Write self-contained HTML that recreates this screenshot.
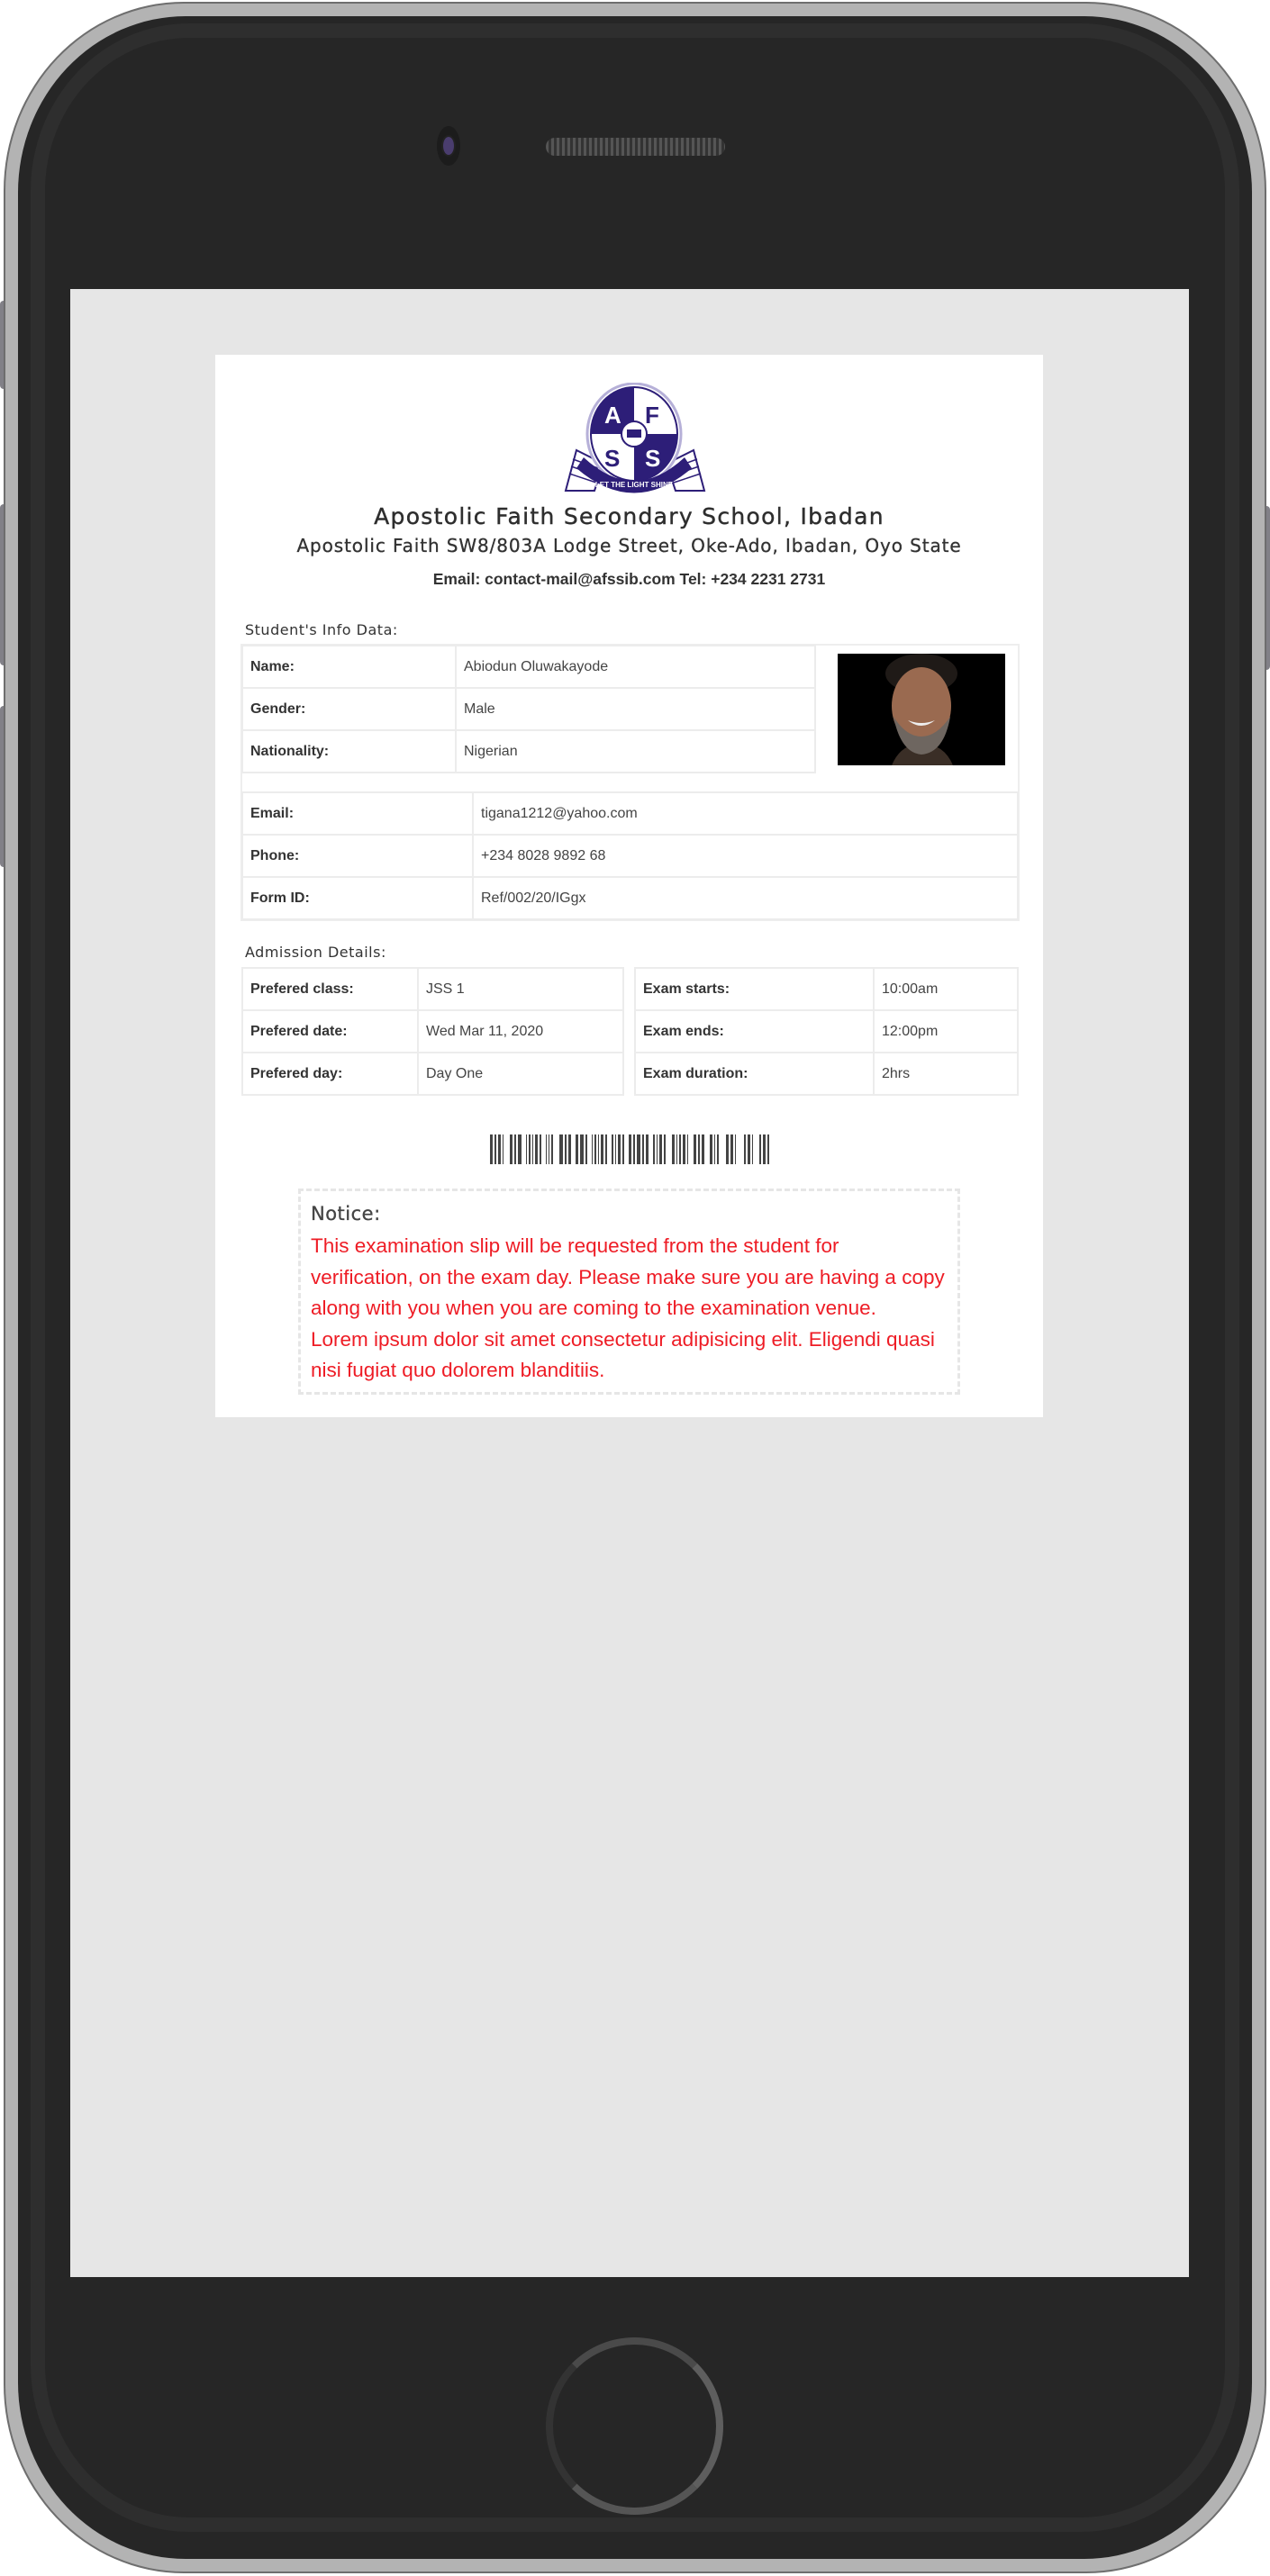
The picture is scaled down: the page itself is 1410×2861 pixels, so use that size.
<!DOCTYPE html>
<html><head><meta charset="utf-8">
<style>
*{margin:0;padding:0;box-sizing:border-box}
html,body{width:1410px;height:2861px;background:#fff;overflow:hidden}
body{position:relative;font-family:"Liberation Sans",sans-serif}
.abs{position:absolute}
.btn{position:absolute;left:0;width:10px;background:#818087;border-radius:4px 0 0 4px}
#outer{left:4px;top:2px;width:1402px;height:2856px;border-radius:200px/210px;background:#b3b3b3;border:2px solid #6e6e6e}
#body{left:20px;top:18px;width:1370px;height:2824px;border-radius:186px/196px;background:#262626}
#band{left:34px;top:26px;width:1342px;height:2786px;border-radius:176px/186px;border:16px solid #2e2e2e}
#screen{left:78px;top:321px;width:1242px;height:2208px;background:#e6e6e6}
#card{left:239px;top:394px;width:919px;height:1180px;background:#fff}
.h{font-family:"DejaVu Sans","Liberation Sans",sans-serif;color:#333;text-align:center;width:919px;left:239px}
table{border-collapse:collapse;position:absolute;font-size:16px;color:#333}
td{border:2px solid #ececec;height:47px;padding:0 8px;vertical-align:middle}
td.l{font-weight:bold;color:#333}
td.v{color:#444}
.sec{font-family:"DejaVu Sans",sans-serif;font-size:16px;color:#333;letter-spacing:0.5px}
</style></head><body>
<div class="btn" style="top:334px;height:98px"></div>
<div class="btn" style="top:560px;height:179px"></div>
<div class="btn" style="top:784px;height:179px"></div>
<div class="btn" style="left:1400px;top:562px;height:182px;border-radius:0 4px 4px 0;background:#818087"></div>
<div id="outer" class="abs"></div>
<div id="body" class="abs"></div>
<div id="band" class="abs"></div>
<div class="abs" style="left:485px;top:140px;width:26px;height:44px;border-radius:50%;background:#1c1c1c"></div>
<div class="abs" style="left:490px;top:150px;width:16px;height:24px;border-radius:50%;background:#4a3d6e;border:2px solid #222"></div>
<div class="abs" style="left:606px;top:153px;width:199px;height:20px;border-radius:10px;background:repeating-linear-gradient(90deg,#555 0 3px,#333 3px 6px)"></div>
<div id="screen" class="abs"></div>
<div class="abs" style="left:606px;top:2596px;width:197px;height:197px;border-radius:50%;border:8px solid #555;border-top-color:#4a4a4a;border-right-color:#5e5e5e;border-left-color:#333"></div>

<div id="card" class="abs"></div>
<svg class="abs" style="left:620px;top:425px" width="170" height="130" viewBox="620 425 170 130">
 <polygon points="640,500 670,515 660,545 628,545" fill="#fff" stroke="#2d1e78" stroke-width="2"/>
 <polygon points="770,500 740,515 750,545 782,545" fill="#fff" stroke="#2d1e78" stroke-width="2"/>
 <g stroke="#2d1e78" stroke-width="1.5"><line x1="636" y1="510" x2="664" y2="520"/><line x1="634" y1="518" x2="663" y2="528"/><line x1="632" y1="526" x2="662" y2="536"/><line x1="774" y1="510" x2="746" y2="520"/><line x1="776" y1="518" x2="747" y2="528"/><line x1="778" y1="526" x2="748" y2="536"/></g>
 <ellipse cx="704" cy="482" rx="52" ry="56" fill="#fff" stroke="#b6b0d8" stroke-width="3"/>
 <ellipse cx="704" cy="482" rx="48" ry="52" fill="#fff" stroke="#2d1e78" stroke-width="2"/>
 <path d="M704,430 A48,52 0 0 0 656,482 L704,482Z" fill="#2d1e78"/>
 <path d="M704,534 A48,52 0 0 0 752,482 L704,482Z" fill="#2d1e78"/>
 <path d="M648,508 Q704,560 760,508 L768,520 Q704,575 640,520Z" fill="#2d1e78"/>
 <circle cx="704" cy="482" r="14" fill="#fff" stroke="#2d1e78" stroke-width="2"/>
 <rect x="696" y="477" width="16" height="9" fill="#2d1e78"/>
 <g font-family="Liberation Sans" font-weight="bold" font-size="26"><text x="671" y="470" fill="#fff">A</text><text x="716" y="470" fill="#2d1e78">F</text><text x="671" y="518" fill="#2d1e78">S</text><text x="716" y="518" fill="#fff">S</text></g>
 <text x="704" y="541" font-size="8" fill="#fff" text-anchor="middle" font-family="Liberation Sans" font-weight="bold">LET THE LIGHT SHINE</text>
</svg>
<div class="abs h" style="top:559px;font-size:25px;letter-spacing:1.3px;color:#2e2e2e;-webkit-text-stroke:0.4px #2e2e2e">Apostolic Faith Secondary School, Ibadan</div>
<div class="abs h" style="top:594px;font-size:20px;letter-spacing:0.9px;-webkit-text-stroke:0.3px #333">Apostolic Faith SW8/803A Lodge Street, Oke-Ado, Ibadan, Oyo State</div>
<div class="abs h" style="top:633px;font-size:17.5px;font-weight:bold;font-family:'Liberation Sans',sans-serif">Email: contact-mail@afssib.com Tel: +234 2231 2731</div>

<div class="abs sec" style="left:272px;top:690px">Student's Info Data:</div>
<div class="abs" style="left:267px;top:715px;width:865px;height:308px;border:2px solid #eee"></div>
<table style="left:268px;top:716px;width:638px">
<tr><td class="l" style="width:237px">Name:</td><td class="v">Abiodun Oluwakayode</td></tr>
<tr><td class="l">Gender:</td><td class="v">Male</td></tr>
<tr><td class="l">Nationality:</td><td class="v">Nigerian</td></tr>
</table>
<svg class="abs" style="left:930px;top:726px" width="186" height="124" viewBox="0 0 186 124">
 <rect width="186" height="124" fill="#000"/>
 <path d="M60,124 Q70,100 93,100 Q118,100 128,124Z" fill="#3a2e26"/>
 <ellipse cx="93" cy="22" rx="40" ry="22" fill="#1f1a17"/>
 <ellipse cx="93" cy="58" rx="33" ry="43" fill="#9a6a50"/>
 <path d="M62,70 Q70,110 93,112 Q118,110 125,70 Q110,92 93,92 Q76,92 62,70Z" fill="#6e6660"/>
 <path d="M78,74 Q93,86 108,74 Q93,80 78,74Z" fill="#eee"/>
</svg>
<table style="left:268px;top:879px;width:863px">
<tr><td class="l" style="width:256px">Email:</td><td class="v">tigana1212@yahoo.com</td></tr>
<tr><td class="l">Phone:</td><td class="v">+234 8028 9892 68</td></tr>
<tr><td class="l">Form ID:</td><td class="v">Ref/002/20/IGgx</td></tr>
</table>

<div class="abs sec" style="left:272px;top:1048px">Admission Details:</div>
<table style="left:268px;top:1074px;width:425px">
<tr><td class="l" style="width:195px">Prefered class:</td><td class="v">JSS 1</td></tr>
<tr><td class="l">Prefered date:</td><td class="v">Wed Mar 11, 2020</td></tr>
<tr><td class="l">Prefered day:</td><td class="v">Day One</td></tr>
</table>
<table style="left:704px;top:1074px;width:427px">
<tr><td class="l" style="width:265px">Exam starts:</td><td class="v">10:00am</td></tr>
<tr><td class="l">Exam ends:</td><td class="v">12:00pm</td></tr>
<tr><td class="l">Exam duration:</td><td class="v">2hrs</td></tr>
</table>

<svg class="abs" style="left:544px;top:1260px" width="310" height="33" viewBox="0 0 310 33" fill="#444">
<rect x="0" width="3" height="33"/><rect x="5" width="2" height="33"/><rect x="9" width="3" height="33"/><rect x="14" width="1" height="33"/>
<rect x="22" width="3" height="33"/><rect x="27" width="2" height="33"/><rect x="31" width="4" height="33"/>
<rect x="40" width="1" height="33"/><rect x="43" width="2" height="33"/><rect x="47" width="1" height="33"/><rect x="50" width="3" height="33"/><rect x="55" width="2" height="33"/>
<rect x="62" width="1" height="33"/><rect x="65" width="1" height="33"/><rect x="68" width="2" height="33"/>
<rect x="77" width="4" height="33"/><rect x="83" width="2" height="33"/><rect x="87" width="3" height="33"/>
<rect x="95" width="3" height="33"/><rect x="100" width="4" height="33"/><rect x="106" width="2" height="33"/>
<rect x="113" width="1" height="33"/><rect x="116" width="2" height="33"/><rect x="120" width="1" height="33"/><rect x="123" width="3" height="33"/><rect x="128" width="2" height="33"/>
<rect x="135" width="2" height="33"/><rect x="139" width="1" height="33"/><rect x="142" width="3" height="33"/><rect x="147" width="2" height="33"/>
<rect x="154" width="3" height="33"/><rect x="159" width="2" height="33"/><rect x="163" width="4" height="33"/><rect x="169" width="2" height="33"/><rect x="173" width="3" height="33"/>
<rect x="181" width="2" height="33"/><rect x="185" width="1" height="33"/><rect x="188" width="3" height="33"/><rect x="193" width="2" height="33"/>
<rect x="202" width="3" height="33"/><rect x="207" width="1" height="33"/><rect x="210" width="2" height="33"/><rect x="214" width="3" height="33"/><rect x="219" width="1" height="33"/>
<rect x="226" width="3" height="33"/><rect x="231" width="2" height="33"/><rect x="235" width="3" height="33"/>
<rect x="244" width="3" height="33"/><rect x="249" width="1" height="33"/><rect x="252" width="2" height="33"/>
<rect x="262" width="3" height="33"/><rect x="267" width="3" height="33"/><rect x="272" width="1" height="33"/>
<rect x="282" width="2" height="33"/><rect x="286" width="3" height="33"/><rect x="291" width="1" height="33"/>
<rect x="299" width="2" height="33"/><rect x="303" width="3" height="33"/><rect x="308" width="2" height="33"/>
</svg>

<div class="abs" style="left:331px;top:1320px;width:735px;height:229px;border:3px dashed #e6e6e6;padding:10px 0 0 11px">
<div style="font-family:'DejaVu Sans',sans-serif;font-size:21px;color:#444;letter-spacing:0.5px;line-height:30px;-webkit-text-stroke:0.3px #444">Notice:</div>
<div style="font-size:22.5px;color:#ee1c25;line-height:34.6px;white-space:nowrap;letter-spacing:0;margin-top:4px">This examination slip will be requested from the student for<br>verification, on the exam day. Please make sure you are having a copy<br>along with you when you are coming to the examination venue.<br>Lorem ipsum dolor sit amet consectetur adipisicing elit. Eligendi quasi<br>nisi fugiat quo dolorem blanditiis.</div>
</div>
</body></html>
